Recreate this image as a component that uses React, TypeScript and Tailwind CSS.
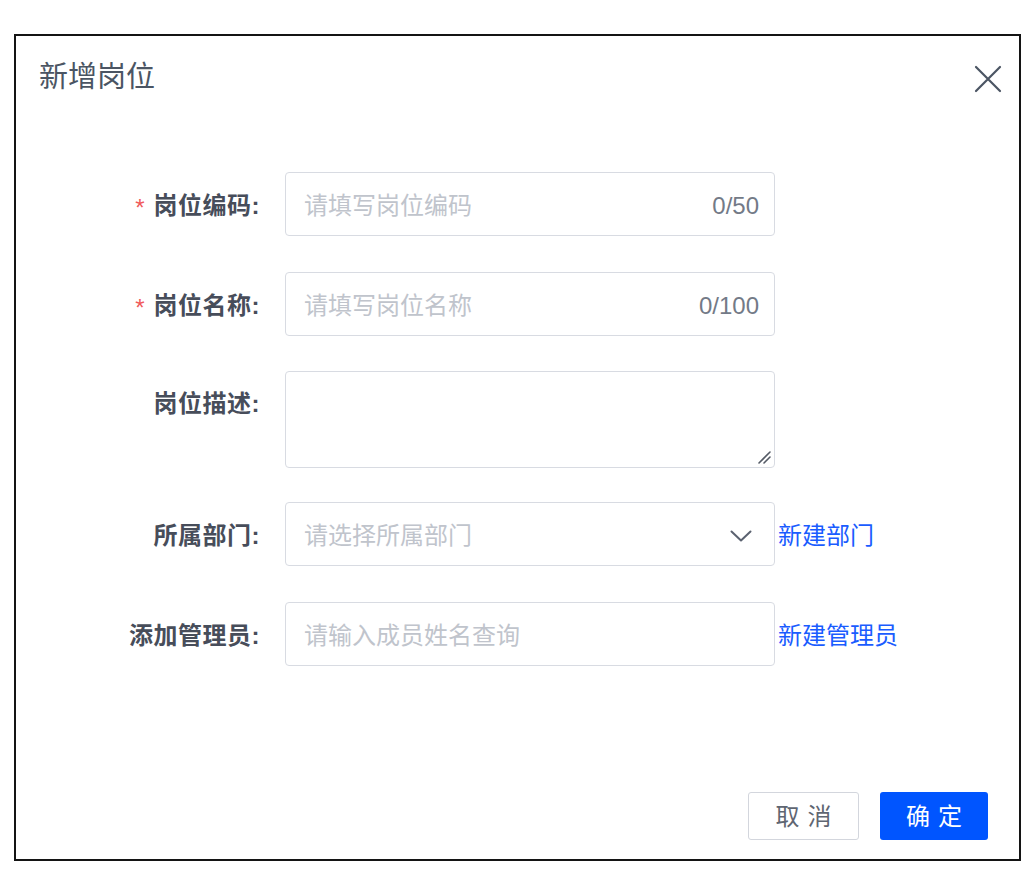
import React from "react";

const font = "font-['Liberation_Sans','Noto_Sans_CJK_SC',sans-serif]";

interface RowProps {
  label: string;
  required?: boolean;
  top?: boolean;
  children: React.ReactNode;
  extra?: React.ReactNode;
}

const Row = ({ label, required, top, children, extra }: RowProps) => {
  return (
    <div className={`flex ${top ? "items-start" : "items-center"}`}>
      <div
        className={`flex w-[244px] shrink-0 items-center justify-end pt-[3px] ${top ? "pt-[18px]" : ""}`}
      >
        {required && (
          <span className="mr-[9px] mt-[4px] text-[24px] leading-[28px] text-[#f05a5a]">*</span>
        )}
        <span className="text-[24px] font-bold leading-[30px] tracking-[0.5px] text-[#474d5a]">
          {label}:
        </span>
      </div>
      <div className="ml-[25px] w-[490px] shrink-0">{children}</div>
      {extra && (
        <a className="ml-[3px] pt-[3px] text-[24px] leading-[30px] text-[#1a5cff]" href="#">
          {extra}
        </a>
      )}
    </div>
  );
};

const TextInput = ({ placeholder, counter }: { placeholder: string; counter?: string }) => {
  return (
    <div className="flex h-[64px] items-center rounded-[4px] border border-[#d8dbe2] bg-white pl-[18px] pr-[15px] pt-[3px]">
      <input
        className="min-w-0 flex-1 bg-transparent text-[24px] text-[#4b5261] outline-none placeholder:text-[#c0c4cc]"
        placeholder={placeholder}
      />
      {counter && <span className="text-[24px] text-[#737a87]">{counter}</span>}
    </div>
  );
};

const App = () => {
  return (
    <div className={`min-h-[890px] bg-white pl-[14px] pt-[34px] ${font}`}>
      <div className="flex h-[827px] w-[1007px] flex-col border-2 border-[#141414] bg-white">
        <div className="flex items-center justify-between pl-[23px] pr-[17px] pt-[21px]">
          <h1 className="text-[29px] font-normal leading-[40px] text-[#4b5563]">新增岗位</h1>
          <button className="mt-[4px] text-[#4b5563]">
            <svg width="28" height="28" viewBox="0 0 28 28" fill="none">
              <path
                d="M2 2L26 26M26 2L2 26"
                stroke="currentColor"
                strokeWidth="2.2"
                strokeLinecap="round"
              />
            </svg>
          </button>
        </div>

        <div className="mt-[75px] flex flex-col">
          <Row label="岗位编码" required>
            <TextInput placeholder="请填写岗位编码" counter="0/50" />
          </Row>
          <div className="mt-[36px]">
            <Row label="岗位名称" required>
              <TextInput placeholder="请填写岗位名称" counter="0/100" />
            </Row>
          </div>
          <div className="mt-[35px]">
            <Row label="岗位描述" top>
              <div className="relative">
                <textarea className="block h-[97px] w-full resize-none rounded-[4px] border border-[#d8dbe2] px-[18px] py-[12px] text-[24px] text-[#4b5261] outline-none" />
                <svg
                  className="pointer-events-none absolute bottom-[4px] right-[4px]"
                  width="14"
                  height="14"
                  viewBox="0 0 14 14"
                  fill="none"
                >
                  <path
                    d="M2 13L13 2M7 13L13 7"
                    stroke="#555b66"
                    strokeWidth="1.6"
                    strokeLinecap="round"
                  />
                </svg>
              </div>
            </Row>
          </div>
          <div className="mt-[34px]">
            <Row label="所属部门" extra="新建部门">
              <div className="flex h-[64px] items-center rounded-[4px] border border-[#d8dbe2] bg-white pl-[18px] pr-[22px] pt-[3px]">
                <span className="flex-1 text-[24px] text-[#c0c4cc]">请选择所属部门</span>
                <svg width="22" height="12" viewBox="0 0 22 12" fill="none">
                  <path
                    d="M1.5 1.5L11 10.5L20.5 1.5"
                    stroke="#5b6270"
                    strokeWidth="2"
                    strokeLinecap="round"
                    strokeLinejoin="round"
                  />
                </svg>
              </div>
            </Row>
          </div>
          <div className="mt-[36px]">
            <Row label="添加管理员" extra="新建管理员">
              <TextInput placeholder="请输入成员姓名查询" />
            </Row>
          </div>
        </div>

        <div className="mt-auto flex justify-end gap-[21px] pb-[19px] pr-[31px]">
          <button className="h-[48px] w-[111px] rounded-[3px] border border-[#d3d6dd] bg-white pt-[2px] text-[24px] tracking-[8px] text-[#5f6672]">
            <span className="ml-[8px]">取消</span>
          </button>
          <button className="h-[48px] w-[108px] rounded-[3px] bg-[#0055ff] pt-[2px] text-[24px] tracking-[8px] text-white">
            <span className="ml-[8px]">确定</span>
          </button>
        </div>
      </div>
    </div>
  );
};

export default App;
